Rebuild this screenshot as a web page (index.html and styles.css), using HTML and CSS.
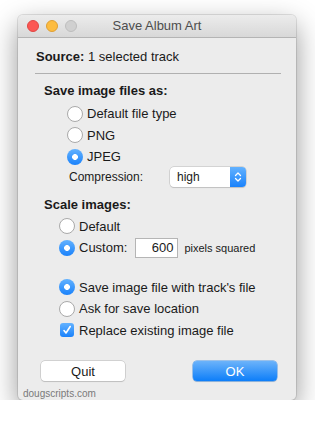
FILE: index.html
```html
<!DOCTYPE html>
<html lang="en">
<head>
<meta charset="UTF-8">
<title>Save Album Art</title>
<link rel="stylesheet" href="styles.css">
</head>
<body>

<div class="window">
    <div class="titlebar">
        <div class="lights">
            <span class="light red"></span>
            <span class="light yellow"></span>
            <span class="light gray"></span>
        </div>
        <div class="title">Save Album Art</div>
    </div>

    <div class="content">
        <div class="source"><b>Source:</b> 1 selected track</div>
        <div class="sep"></div>

        <div class="heading">Save image files as:</div>
        <div class="group format">
            <div class="row"><span class="radio"></span>Default file type</div>
            <div class="row"><span class="radio"></span>PNG</div>
            <div class="row"><span class="radio on"></span>JPEG</div>
        </div>
        <div class="compression">
            <span class="comp-label">Compression:</span>
            <div class="select">
                <span class="select-value">high</span>
                <span class="select-arrows">
                    <svg width="8" height="12" viewBox="0 0 8 12">
                        <path d="M1.5 4.5 L4 2 L6.5 4.5 M1.5 7.5 L4 10 L6.5 7.5" fill="none" stroke="#fff" stroke-width="1.3" stroke-linecap="round" stroke-linejoin="round"/>
                    </svg>
                </span>
            </div>
        </div>

        <div class="heading scale">Scale images:</div>
        <div class="group sizes">
            <div class="row"><span class="radio"></span>Default</div>
            <div class="row"><span class="radio on"></span>Custom:
                <span class="num-input">600</span>
                <span class="small">pixels squared</span>
            </div>
        </div>

        <div class="group location">
            <div class="row"><span class="radio on"></span>Save image file with track's file</div>
            <div class="row"><span class="radio"></span>Ask for save location</div>
            <div class="row"><span class="check">
                <svg width="10" height="10" viewBox="0 0 10 10">
                    <path d="M2 5.5 L4 8 L8.2 1.5" fill="none" stroke="#fff" stroke-width="1.6" stroke-linecap="round" stroke-linejoin="round"/>
                </svg>
            </span>Replace existing image file</div>
        </div>

        <div class="buttons">
            <button class="btn">Quit</button>
            <button class="btn primary">OK</button>
        </div>
        <div class="footer">dougscripts.com</div>
    </div>
</div>

</body>
</html>
```

FILE: styles.css
```css
body {
    margin: 0;
    padding: 15px 0 0 18px;
    background: #fff;
    font-family: "Liberation Sans", Arial, sans-serif;
    font-size: 13px;
    color: #1a1a1a;
}
.window {
    width: 278px;
    height: 385px;
    background: #ececec;
    border-radius: 5px;
    box-shadow: 0 10px 28px rgba(0, 0, 0, 0.42), 0 0 0 1px rgba(0, 0, 0, 0.1);
    overflow: hidden;
}
.titlebar {
    height: 22px;
    background: linear-gradient(#ececec, #d8d8d8);
    border-bottom: 1px solid #b4b4b4;
    display: flex;
    align-items: center;
    position: relative;
}
.lights {
    display: flex;
    gap: 7px;
    padding-left: 9px;
}
.light {
    width: 12px;
    height: 12px;
    border-radius: 50%;
    box-sizing: border-box;
}
.red { background: #fc5753; border: 1px solid #df4744; }
.yellow { background: #fdbc40; border: 1px solid #de9f34; }
.gray { background: #d0d0d0; border: 1px solid #bdbdbd; }
.title {
    position: absolute;
    left: 0;
    right: 0;
    top: 0;
    line-height: 22px;
    text-align: center;
    color: #4d4d4d;
    pointer-events: none;
}
.content {
    display: flex;
    flex-direction: column;
}
.source {
    margin: 11px 0 0 18px;
    line-height: 16px;
}
.sep {
    margin: 8px 0 0 17px;
    width: 246px;
    border-top: 1px solid #b0b0b0;
}
.heading {
    margin: 9px 0 0 26px;
    line-height: 16px;
    font-weight: bold;
}
.group {
    display: flex;
    flex-direction: column;
    margin-top: 4px;
}
.format { margin-left: 49px; }
.sizes { margin: 3px 0 0 41px; }
.location { margin: 18px 0 0 41px; }
.row {
    height: 21.5px;
    display: flex;
    align-items: center;
}
.radio {
    width: 16px;
    height: 16px;
    border-radius: 50%;
    box-sizing: border-box;
    border: 1px solid #a9a9a9;
    background: #fff;
    margin-right: 4px;
    flex: none;
}
.radio.on {
    border: none;
    background: radial-gradient(circle, #fff 0 2.6px, transparent 3.2px), linear-gradient(#63b2ff, #1a82fb);
}
.check {
    width: 14px;
    height: 14px;
    margin: 0 5px 0 1px;
    border-radius: 3px;
    background: linear-gradient(#63b2ff, #1a82fb);
    display: flex;
    align-items: center;
    justify-content: center;
    flex: none;
}
.compression {
    margin: -1px 0 0 51px;
    height: 20px;
    display: flex;
    align-items: center;
    font-size: 12px;
}
.comp-label { width: 101px; }
.select {
    width: 76px;
    height: 20px;
    box-sizing: border-box;
    border-radius: 4px;
    background: #fff;
    box-shadow: 0 0 0 0.5px #b9b9b9, 0 1px 1px rgba(0, 0, 0, 0.15);
    display: flex;
    align-items: center;
    overflow: hidden;
}
.select-value {
    flex: 1;
    padding-left: 7px;
}
.select-arrows {
    width: 16px;
    height: 20px;
    background: linear-gradient(#63b2ff, #1a82fb);
    display: flex;
    align-items: center;
    justify-content: center;
}
.scale { margin-top: 10px; }
.num-input {
    margin-left: 8px;
    width: 43px;
    height: 20px;
    box-sizing: border-box;
    border: 1px solid #b5b5b5;
    background: #fff;
    text-align: right;
    padding-right: 4px;
    line-height: 18px;
}
.small {
    font-size: 11px;
    margin-left: 6px;
}
.buttons {
    margin: 20px 0 0 23px;
    display: flex;
    gap: 68px;
}
.btn {
    width: 84px;
    height: 20px;
    font-family: inherit;
    font-size: 13px;
    color: #1a1a1a;
    background: #fff;
    border: none;
    border-radius: 4px;
    box-shadow: 0 0 0 0.5px #b5b5b5, 0 1px 1px rgba(0, 0, 0, 0.15);
    padding: 0;
}
.btn.primary {
    color: #fff;
    background: linear-gradient(#6cb3fa, #0d7ef9);
    box-shadow: 0 0 0 0.5px #4b95e8, 0 1px 1px rgba(0, 0, 0, 0.15);
}
.footer {
    margin: 7px 0 0 5px;
    font-size: 10px;
    line-height: 12px;
    color: #7a7a7a;
}
```
